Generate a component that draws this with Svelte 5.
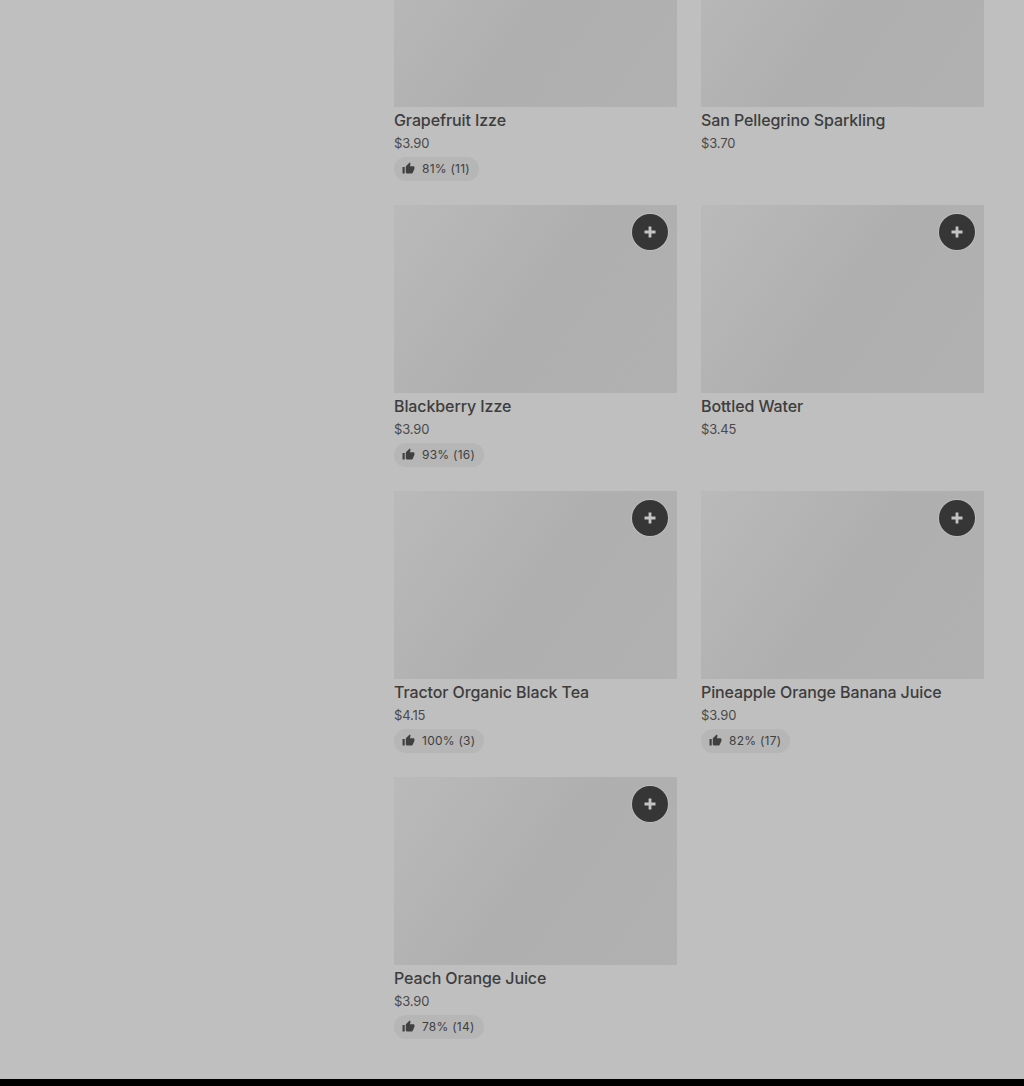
<script lang="ts">
	interface Item {
		name: string;
		price: string;
		rating?: string;
	}

	const items: Item[] = [
		{ name: 'Grapefruit Izze', price: '$3.90', rating: '81% (11)' },
		{ name: 'San Pellegrino Sparkling', price: '$3.70' },
		{ name: 'Blackberry Izze', price: '$3.90', rating: '93% (16)' },
		{ name: 'Bottled Water', price: '$3.45' },
		{ name: 'Tractor Organic Black Tea', price: '$4.15', rating: '100% (3)' },
		{ name: 'Pineapple Orange Banana Juice', price: '$3.90', rating: '82% (17)' },
		{ name: 'Peach Orange Juice', price: '$3.90', rating: '78% (14)' }
	];
</script>

<div class="page">
	<main class="grid">
		{#each items as item}
			<article class="card">
				<div class="photo">
					<button class="add" aria-label="Add {item.name}">
						<svg viewBox="0 0 14 14" width="14" height="14">
							<path d="M7 1.5v11M1.5 7h11" stroke="currentColor" stroke-width="2.8" fill="none" />
						</svg>
					</button>
				</div>
				<h3>{item.name}</h3>
				<p class="price">{item.price}</p>
				{#if item.rating}
					<span class="rating">
						<svg viewBox="0 0 24 24" width="13" height="13">
							<path d="M1 21h4V9H1v12zM23 10c0-1.1-.9-2-2-2h-6.3l1-4.6v-.3c0-.4-.2-.8-.4-1.1L14.2 1 7.6 7.6C7.2 8 7 8.5 7 9v10c0 1.1.9 2 2 2h9c.8 0 1.5-.5 1.8-1.2l3-7.1c.1-.2.2-.5.2-.7v-2z" fill="currentColor" />
						</svg>
						{item.rating}
					</span>
				{/if}
			</article>
		{/each}
	</main>
	<div class="footer"></div>
</div>

<style>
	:global(body) { background: #bfbfbf; }
	.page { height: 1086px; overflow: hidden; display: flex; flex-direction: column; font-family: Inter, "Liberation Sans", sans-serif; color: #3a3a3a; }
	.grid { flex: 1; min-height: 0; display: grid; grid-template-columns: 283px 283px; grid-auto-rows: 286px; column-gap: 24px; padding-left: 394px; margin-top: -81px; }
	.card { display: flex; flex-direction: column; align-items: flex-start; }
	.photo { width: 100%; height: 188px; flex: none; display: flex; justify-content: flex-end; align-items: flex-start; padding: 9px; box-sizing: border-box; background: linear-gradient(125deg, #bababa 0%, #afafaf 50%, #b1b1b1 100%); }
	.add { width: 36px; height: 36px; border: none; border-radius: 50%; padding: 0; display: flex; align-items: center; justify-content: center; background: #363636; color: #c4c4c4; box-shadow: 0 0 0 1px #bcbcbc; }
	h3 { margin: 2px 0 0; font-size: 16px; line-height: 22px; font-weight: 500; letter-spacing: -0.1px; color: #3d3d3d; white-space: nowrap; }
	.price { margin: 3px 0 0; font-size: 13px; line-height: 19px; letter-spacing: -0.15px; color: #4a4a4a; }
	.rating { margin-top: 4px; height: 24px; box-sizing: border-box; display: inline-flex; align-items: center; gap: 7px; padding: 0 9px 1px 8px; border-radius: 12px; background: #b6b6b6; font-size: 12px; letter-spacing: 0.25px; color: #404040; white-space: nowrap; }
	.footer { height: 7px; flex: none; background: #000; }
</style>
